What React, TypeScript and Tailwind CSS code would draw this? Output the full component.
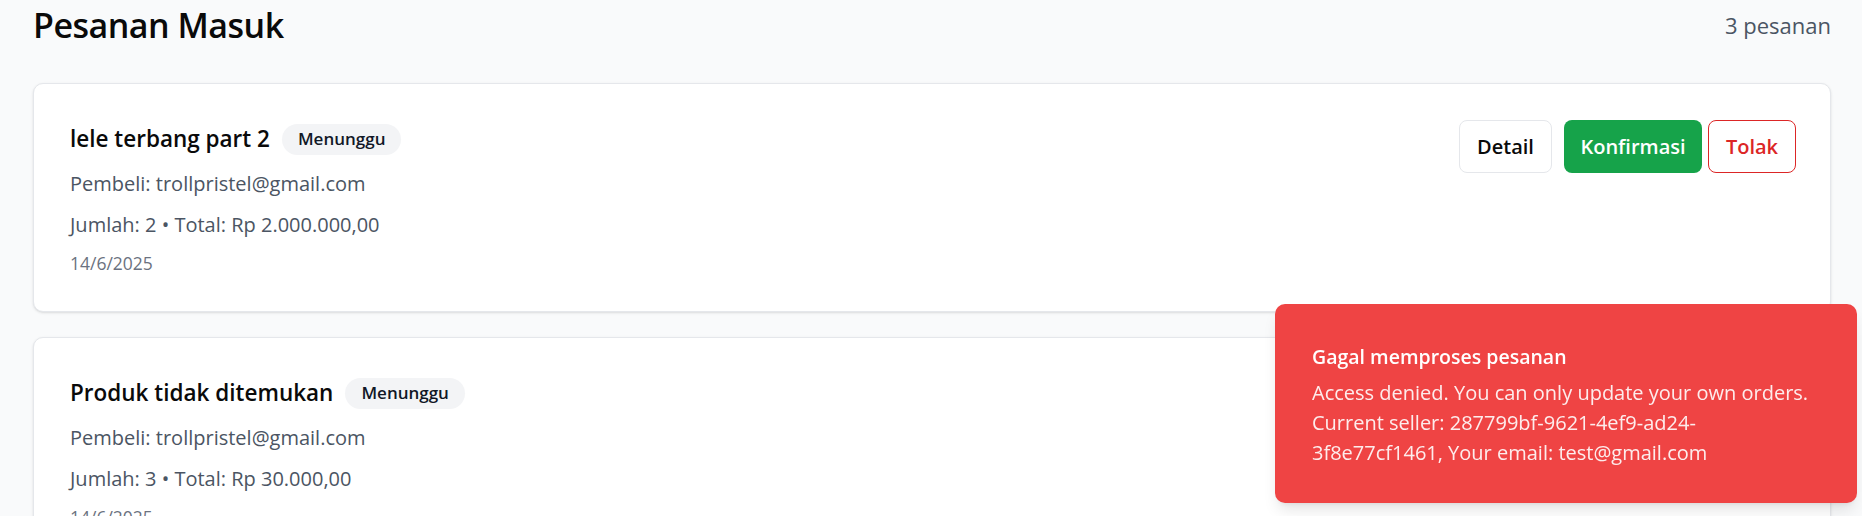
import React from "react";

interface Order {
  id: number;
  product: string;
  buyer: string;
  qty: number;
  total: string;
  date: string;
}

const orders: Order[] = [
  { id: 1, product: "lele terbang part 2", buyer: "trollpristel@gmail.com", qty: 2, total: "Rp 2.000.000,00", date: "14/6/2025" },
  { id: 2, product: "Produk tidak ditemukan", buyer: "trollpristel@gmail.com", qty: 3, total: "Rp 30.000,00", date: "14/6/2025" },
];

function OrderCard({ order }: { order: Order }) {
  return (
    <div className="bg-white border border-[#e5e7eb] rounded-[10px] shadow-sm pt-[36px] pb-[35px] pl-[36px] pr-[34px]">
      <div className="flex justify-between items-start">
        <div className="flex flex-col">
          <div className="flex items-center gap-[12px] h-[38px]">
            <h3 className="text-[22.5px] leading-[38px] font-semibold text-[#0a0a0a]">{order.product}</h3>
            <span className="h-[31px] px-[16px] flex items-center rounded-full bg-[#f3f4f6] text-[17px] font-semibold text-[#111827]">
              Menunggu
            </span>
          </div>
          <p className="mt-[11px] text-[20px] leading-[30px] text-[#4b5563]">Pembeli: {order.buyer}</p>
          <p className="mt-[11px] text-[20px] leading-[30px] text-[#4b5563]">
            Jumlah: {order.qty} • Total: {order.total}
          </p>
          <p className="mt-[11px] text-[17.5px] leading-[25px] text-[#6b7280]">{order.date}</p>
        </div>
        <div className="flex items-center">
          <button className="w-[93px] h-[53px] flex items-center justify-center bg-white border border-[#e5e7eb] rounded-[8px] text-[20px] font-semibold text-[#0a0a0a]">
            Detail
          </button>
          <button className="ml-[12px] w-[138px] h-[53px] flex items-center justify-center bg-[#16a34a] rounded-[8px] text-[20px] font-semibold text-white">
            Konfirmasi
          </button>
          <button className="ml-[6px] w-[88px] h-[53px] flex items-center justify-center bg-white border border-[#dc2626] rounded-[8px] text-[20px] font-semibold text-[#dc2626]">
            Tolak
          </button>
        </div>
      </div>
    </div>
  );
}

export default function App() {
  return (
    <div className="min-h-screen bg-[#f9fafb] pl-[33px] pr-[31px] font-['Open_Sans',sans-serif]">
      <div className="flex justify-between items-center pt-[3px] h-[48px] mb-[35px]">
        <h1 className="text-[34px] leading-[45px] font-semibold tracking-[-0.5px] text-[#0a0a0a]">Pesanan Masuk</h1>
        <span className="text-[22px] leading-[35px] text-[#4b5563]">3 pesanan</span>
      </div>
      <div className="flex flex-col gap-[25px]">
        {orders.map((o) => (
          <OrderCard key={o.id} order={o} />
        ))}
      </div>

      <div className="fixed right-[5px] bottom-[13px] w-[582px] bg-[#ef4444] rounded-[10px] shadow-lg pt-[38px] pb-[35px] pl-[37px] pr-[40px]">
        <p className="text-[19.5px] leading-[30px] font-semibold text-white">Gagal memproses pesanan</p>
        <p className="mt-[6px] text-[20px] leading-[30px] text-white/90">
          Access denied. You can only update your own orders. Current seller: 287799bf-9621-4ef9-ad24-3f8e77cf1461, Your email: test@gmail.com
        </p>
      </div>
    </div>
  );
}
